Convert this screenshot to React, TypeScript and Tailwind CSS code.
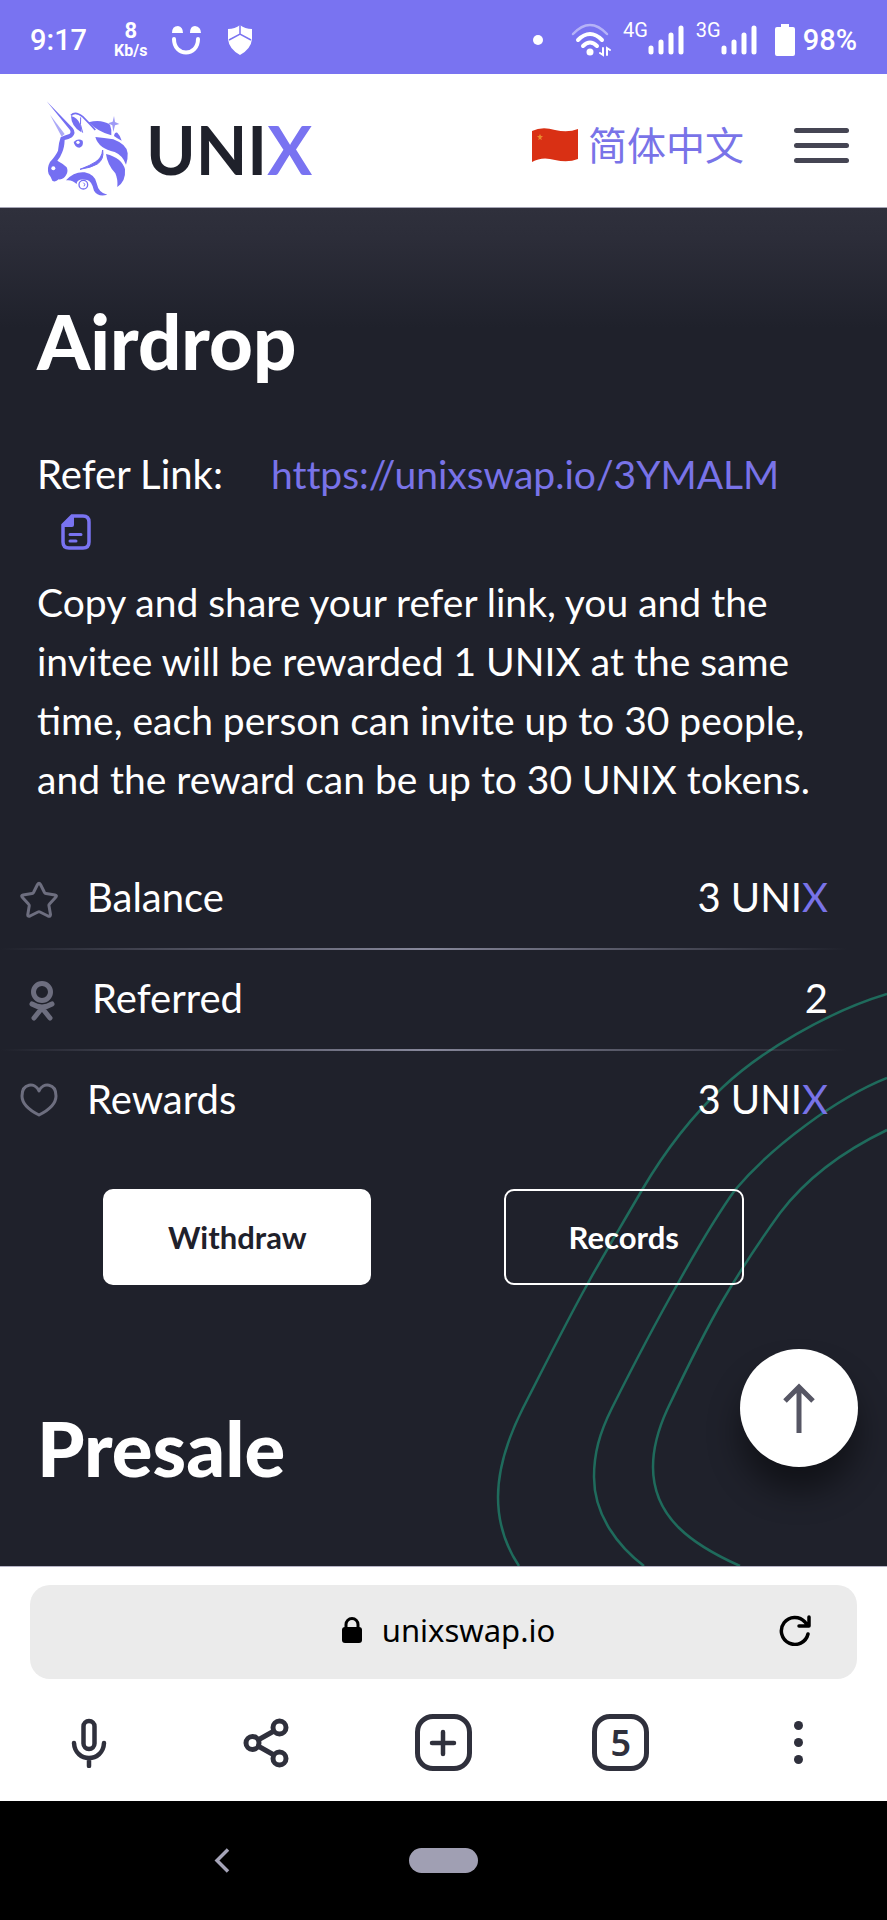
import { useState } from "react";

const LINK = "https://unixswap.io/3YMALM";

function UnicornLogo() {
  return (
    <svg viewBox="48 35 252 288" className="h-24 w-21 shrink-0" fill="#756ff2" aria-hidden="true">
      {/* horn and face */}
      <path d="M50 36 L128 116 Q140 130 126 144 Q116 150 104 152 Q103 176 96 190 Q90 206 82 214 Q98 222 110 234 Q116 246 108 258 Q100 272 86 270 Q76 280 67 274 Q64 264 56 254 Q50 236 60 218 Q78 198 84 184 Q86 160 92 144 Q104 138 118 134 Q124 130 120 122 Z" />
      <path d="M60 76 L104 134 L95 142 Z" opacity="0.6" />
      <circle cx="70" cy="237" r="6" fill="#fff" />
      {/* ear */}
      <path d="M123 80 Q142 84 150 104 Q156 120 154 129 Q124 112 123 80 Z" />
      <path d="M123 78 Q136 64 158 82 Q176 100 196 122" fill="none" stroke="#756ff2" strokeWidth="5" />
      <path d="M152 84 Q148 104 158 130" fill="none" stroke="#756ff2" strokeWidth="3" />
      {/* eye */}
      <path d="M131 158 Q144 146 158 154 Q162 170 148 175 Q134 174 131 158 Z" />
      <circle cx="144" cy="159" r="5" fill="#fff" />
      {/* mane */}
      <path d="M176 99 Q212 88 240 106 Q246 122 244 138 Q204 128 176 99 Z" />
      <path d="M252 140 Q254 128 262 130 Q272 140 275 154 Q262 148 252 140 Z" />
      <path d="M196 143 Q222 146 250 150 Q292 166 293 192 Q294 210 288 226 Q278 198 254 188 Q206 178 196 143 Z" />
      <path d="M228 194 Q276 206 285 240 Q288 276 262 293 Q264 270 256 252 Q232 226 228 194 Z" />
      <path d="M252 80 L255 98 L268 104 L255 108 L250 128 L247 108 L234 102 L248 97 Z" opacity="0.7" />
      {/* jaw and beard */}
      <path d="M218 182 Q223 210 202 224 Q184 235 150 240 Q182 228 196 218 Q216 206 218 182 Z" stroke="#756ff2" strokeWidth="3" />
      <path d="M108 273 Q132 246 164 249 Q196 256 200 282 Q206 312 232 316 Q204 324 192 304 Q186 276 172 272 Q140 266 140 284 Q126 270 108 273 Z" />
      <circle cx="160" cy="286" r="13" fill="#fff" stroke="#756ff2" strokeWidth="4" />
      <path d="M160 280 Q168 284 162 291" fill="none" stroke="#756ff2" strokeWidth="3" />
    </svg>
  );
}

function SignalBars() {
  return (
    <svg viewBox="0 0 36 30" className="h-[30px] w-9" stroke="#fff" strokeWidth="5" strokeLinecap="round" aria-hidden="true">
      <path d="M3 23V27M13 17V27M23 10V27M33 3V27" />
    </svg>
  );
}

function StatusBar() {
  return (
    <div className="flex justify-between bg-[#7973f1] px-[30px] pt-5 pb-[15px] font-[Roboto,sans-serif] text-white">
      <div className="flex items-center">
        <span className="text-[29px] leading-[34px] font-medium">9:17</span>
        <div className="ml-[27px] flex flex-col items-center font-bold">
          <span className="text-[22px] leading-[22px]">8</span>
          <span className="text-base leading-[17px]">Kb/s</span>
        </div>
        <svg viewBox="0 0 30 30" className="ml-6 h-[30px] w-[30px]" fill="#fff" aria-hidden="true">
          <path d="M1 8Q1 1 7 1Q12 2 12 8ZM19 8Q19 1 24 1Q30 2 30 8Z" />
          <path d="M3 14C3 32 27 32 27 14" fill="none" stroke="#fff" strokeWidth="4" strokeLinecap="round" />
        </svg>
        <svg viewBox="0 0 24 30" className="ml-[27px] h-[30px] w-6" fill="#fff" aria-hidden="true">
          <path d="M12 0Q17 4 24 4V14Q23 24 12 30Q1 24 0 14V4Q7 4 12 0Z" />
          <path d="M12 0V9M1 15L12 9L23 15" fill="none" stroke="#7973f1" strokeWidth="1.5" />
        </svg>
      </div>

      <div className="flex items-center">
        <span className="mr-7 h-[10px] w-[10px] rounded-full bg-white" />
        <svg viewBox="0 0 40 34" className="h-[34px] w-10" fill="none" stroke="#fff" strokeWidth="4" strokeLinecap="round" aria-hidden="true">
          <path d="M2 11Q19 -7 36 11" strokeWidth="2.5" opacity="0.45" />
          <path d="M7 17Q19 5 31 17M12 23Q19 16 26 23" />
          <circle cx="19" cy="29" r="3.5" fill="#fff" stroke="none" />
          <path d="M32 25V32L29 30M36 32V25L39 27" strokeWidth="2" />
        </svg>
        <span className="ml-3 self-start text-xl leading-5">4G</span>
        <SignalBars />
        <span className="ml-3 self-start text-xl leading-5">3G</span>
        <SignalBars />
        <svg viewBox="0 0 20 32" className="ml-[18px] h-8 w-5" fill="#fff" aria-hidden="true">
          <path d="M6 0H14V3H18Q20 3 20 5V30Q20 32 18 32H2Q0 32 0 30V5Q0 3 2 3H6Z" />
        </svg>
        <span className="ml-2 text-[29px] leading-[34px] font-medium">98%</span>
      </div>
    </div>
  );
}

function SiteHeader() {
  return (
    <header className="flex items-center justify-between border-b border-[#a5a5b5] bg-white pt-[27px] pr-[38px] pb-[10px] pl-[46px]">
      <a href="#" className="flex items-center gap-4">
        <UnicornLogo />
        <span className="text-[67px] leading-[80px] font-bold text-[#1f212b]">
          UNI<span className="text-[#7973f1]">X</span>
        </span>
      </a>
      <div className="flex items-center gap-[50px] pb-2">
        <button className="flex cursor-pointer items-center gap-[10px]">
          <svg viewBox="0 0 46 34" className="h-[34px] w-[46px]" aria-hidden="true">
            <path d="M0 3Q10 -2 23 2Q36 5 46 1V31Q36 35 23 32Q10 28 0 34Z" fill="#d93014" />
            <path d="M8 6L9 8L11 8L9 10L10 12L8 11L6 12L7 10L5 8L7 8Z" fill="#e98a2c" />
          </svg>
          <span className="pb-1 font-['Noto_Sans_CJK_SC',sans-serif] text-[39px] leading-[46px] text-[#7973e8]">
            简体中文
          </span>
        </button>
        <button aria-label="Menu" className="flex w-[55px] cursor-pointer flex-col gap-[10px]">
          <span className="h-[5px] rounded-full bg-[#454553]" />
          <span className="h-[5px] rounded-full bg-[#454553]" />
          <span className="h-[5px] rounded-full bg-[#454553]" />
        </button>
      </div>
    </header>
  );
}

function StarIcon() {
  return (
    <svg viewBox="0 -4 38 42" className="h-[42px] w-[38px]" fill="none" stroke="#6d6e7f" strokeWidth="3" strokeLinejoin="round" aria-hidden="true">
      <path d="M17.5 3.5Q19 1 20.5 3.5L24.5 11.5Q25 12.4 26 12.6L35 14Q37.5 14.5 35.5 16.5L29.5 23Q28.7 23.8 29 25L30.5 33.5Q30.5 36 28 35L20 31Q19 30.5 18 31L10 35Q7.5 36 7.8 33.5L9.2 25Q9.4 23.8 8.5 23L2.5 16.5Q.7 14.5 3 14L12 12.6Q13 12.4 13.5 11.5Z" />
    </svg>
  );
}

function PersonIcon() {
  return (
    <svg viewBox="0 -4 26 46" className="h-[46px] w-[26px]" fill="none" stroke="#6d6e7f" strokeWidth="5" strokeLinecap="round" aria-hidden="true">
      <circle cx="13" cy="12" r="8.5" />
      <path d="M3 24Q13 30 23 24M13 28L5 38M13 28L21 38" />
    </svg>
  );
}

function HeartIcon() {
  return (
    <svg viewBox="0 0 38 34" className="h-[34px] w-[38px]" fill="none" stroke="#6d6e7f" strokeWidth="3" strokeLinejoin="round" aria-hidden="true">
      <path d="M19 8C23 -1 36 0 36 13C36 20 29 27 19 32C9 27 2 20 2 13C2 0 15 -1 19 8Z" />
    </svg>
  );
}

function UnixAmount({ value }: { value: number }) {
  return (
    <>
      {value} UNI<span className="text-[#7973e8]">X</span>
    </>
  );
}

const rows = [
  { label: "Balance", icon: <StarIcon />, value: <UnixAmount value={3} /> },
  { label: "Referred", icon: <PersonIcon />, value: 2, wide: true },
  { label: "Rewards", icon: <HeartIcon />, value: <UnixAmount value={3} /> },
];

function Airdrop() {
  const [copied, setCopied] = useState(false);

  const copyLink = () => {
    navigator.clipboard?.writeText(LINK);
    setCopied(true);
  };

  return (
    <section className="relative">
      <h2 className="px-[37px] text-[76px] leading-[88px] font-black">Airdrop</h2>

      <div className="px-[37px] pt-[60px] text-[39px] leading-[59px]">
        <div className="flex flex-wrap gap-x-12">
          <span className="text-[40px]">Refer Link:</span>
          <a href={LINK} className="text-[#7973e8] [font-variant-ligatures:none]">{LINK}</a>
        </div>
        <button
          onClick={copyLink}
          aria-label={copied ? "Copied" : "Copy link"}
          className="ml-6 flex h-14 cursor-pointer items-center"
        >
          <svg viewBox="0 0 30 36" className="h-9 w-[30px]" aria-hidden="true">
            <path d="M11 2H22Q28 2 28 8V28Q28 34 22 34H8Q2 34 2 28V11Z" fill="none" stroke="#7973f1" strokeWidth="3.5" />
            <path d="M13 1V11Q13 13 11 13H1Z" fill="#7973f1" />
            <path d="M9 20.5H20M9 27H15" stroke="#7973f1" strokeWidth="3" strokeLinecap="round" />
          </svg>
        </button>
        <p className="pt-[13px]">
          Copy and share your refer link, you and the invitee will be rewarded 1
          UNIX at the same time, each person can invite up to 30 people, and the
          reward can be up to 30 UNIX tokens.
        </p>
      </div>

      <dl className="pt-10 text-[40px] leading-[59px]">
        {rows.map((row, i) => (
          <div key={row.label}>
            <div className="flex h-[99px] items-center pr-[59px] pb-[2px] pl-5">
              <dt className="flex flex-1 items-center">
                <span className={row.wide ? "mr-[37px] ml-[9px]" : "mr-[29px]"}>{row.icon}</span>
                {row.label}
              </dt>
              <dd>{row.value}</dd>
            </div>
            {i < rows.length - 1 && (
              <div className="mr-10 h-[2px] bg-linear-to-r from-transparent via-[#87889b] to-transparent" />
            )}
          </div>
        ))}
      </dl>

      <div className="grid grid-cols-2 justify-items-center pt-[39px] pr-[70px] pl-[44px] text-[31px] font-bold">
        <button className="h-24 w-[268px] cursor-pointer rounded-[10px] bg-white text-[#1f212b]">
          Withdraw
        </button>
        <button className="h-24 w-60 cursor-pointer rounded-[10px] border-2 border-white">
          Records
        </button>
      </div>
    </section>
  );
}

function Waves() {
  return (
    <svg
      viewBox="0 0 400 580"
      className="pointer-events-none absolute right-0 bottom-0 h-[580px] w-[400px]"
      fill="none"
      stroke="#1f6b5c"
      strokeWidth="2.5"
      aria-hidden="true"
    >
      <path d="M400 8C340 26 273 66 236 101C193 141 165 187 155 204C130 247 110 280 100 299C82 331 60 375 36 422C20 454 11 482 11 511C11 540 20 562 32 580" />
      <path d="M400 92C350 112 285 160 248 204C225 236 205 272 190 299C165 343 146 380 125 422C112 448 107 468 107 491C107 530 132 561 157 580" />
      <path d="M400 144C350 168 315 198 293 227C275 252 253 285 236 314C215 350 198 386 180 424C170 446 166 462 166 481C166 532 206 559 253 580" />
    </svg>
  );
}

function BrowserBar() {
  return (
    <footer className="border-t border-[#b5b3c5] bg-white font-['Noto_Sans',sans-serif] text-[#2f303c]">
      <div className="px-[30px] pt-[18px]">
        <div className="grid grid-cols-[1fr_auto_1fr] items-center rounded-[20px] bg-[#ebebeb] pt-5 pr-[46px] pb-6 pl-14 text-black">
          <span />
          <div className="flex items-center gap-5 text-[31px] leading-[50px]">
            <svg viewBox="0 0 20 26" className="h-[26px] w-5" aria-hidden="true">
              <rect y="10" width="20" height="16" rx="3" />
              <path d="M4 11V7.5A6 6 0 0 1 16 7.5V11" fill="none" stroke="#000" strokeWidth="3" />
            </svg>
            <span>unixswap.io</span>
          </div>
          <button aria-label="Reload" className="cursor-pointer justify-self-end">
            <svg viewBox="0 0 32 32" className="h-8 w-8" fill="none" stroke="#000" strokeWidth="3.5" strokeLinecap="round" strokeLinejoin="round" aria-hidden="true">
              <path d="M29 20A13.5 13.5 0 1 1 26 8L29 12M30 3V12H20" />
            </svg>
          </button>
        </div>
      </div>
      <div className="grid grid-cols-5 items-center justify-items-center pt-[35px] pb-[30px]">
        <button aria-label="Voice search" className="cursor-pointer">
          <svg viewBox="0 0 36 50" className="h-[50px] w-9" fill="none" stroke="currentColor" strokeWidth="4.5" strokeLinecap="round" aria-hidden="true">
            <rect x="12.5" y="3" width="11" height="28" rx="5.5" />
            <path d="M3 25C4 45 32 45 33 25M18 41V48" />
          </svg>
        </button>
        <button aria-label="Share" className="cursor-pointer">
          <svg viewBox="0 0 46 50" className="h-[50px] w-[46px]" fill="none" stroke="currentColor" strokeWidth="5" aria-hidden="true">
            <circle cx="9.5" cy="25" r="6.5" />
            <circle cx="36.5" cy="9.5" r="6.5" />
            <circle cx="36.5" cy="40.5" r="6.5" />
            <path d="M15 22L31 13M15 28L31 37" />
          </svg>
        </button>
        <button aria-label="New tab" className="flex h-[57px] w-[57px] cursor-pointer items-center justify-center rounded-[18px] border-5 border-[#2f303c]">
          <svg viewBox="0 0 28 28" className="h-7 w-7" stroke="currentColor" strokeWidth="4.5" strokeLinecap="round" aria-hidden="true">
            <path d="M14 3V25M3 14H25" />
          </svg>
        </button>
        <button aria-label="Open tabs" className="flex h-[57px] w-[57px] cursor-pointer items-center justify-center rounded-[18px] border-5 border-[#2f303c] text-4xl leading-9 font-semibold">
          5
        </button>
        <button aria-label="More" className="flex cursor-pointer flex-col gap-2">
          <span className="h-[9px] w-[9px] rounded-full bg-[#2f303c]" />
          <span className="h-[9px] w-[9px] rounded-full bg-[#2f303c]" />
          <span className="h-[9px] w-[9px] rounded-full bg-[#2f303c]" />
        </button>
      </div>
    </footer>
  );
}

function SystemNav() {
  return (
    <nav className="grid grid-cols-3 items-center justify-items-center bg-black px-[12.5%] py-[47px]">
      <button aria-label="Back" className="cursor-pointer">
        <svg viewBox="0 0 16 25" className="h-[25px] w-4" fill="none" stroke="#a5a4b8" strokeWidth="3.5" aria-hidden="true">
          <path d="M14 1.5L3 12.5L14 23.5" />
        </svg>
      </button>
      <button aria-label="Home" className="h-[25px] w-[69px] cursor-pointer rounded-full bg-[#a09fb3]" />
    </nav>
  );
}

export default function App() {
  return (
    <div className="min-h-screen bg-black font-[Lato,sans-serif]">
      <StatusBar />
      <SiteHeader />

      <main className="relative bg-[linear-gradient(#2f303c,#2c2d39_30px,#1f212b_120px)] pt-[89px] pb-[74px] text-white">
        <Waves />
        <Airdrop />
        <h2 className="px-[37px] pt-[119px] text-[76px] leading-[88px] font-black">Presale</h2>
        <button
          aria-label="Back to top"
          onClick={() => window.scrollTo({ top: 0, behavior: "smooth" })}
          className="absolute right-[29px] bottom-[99px] flex h-[118px] w-[118px] cursor-pointer items-center justify-center rounded-full bg-white shadow-[0_24px_32px_rgba(0,0,0,0.45)]"
        >
          <svg viewBox="0 0 32 50" className="h-[50px] w-8" fill="none" stroke="#565664" strokeWidth="5" aria-hidden="true">
            <path d="M16 50V4M2 18L16 4L30 18" />
          </svg>
        </button>
      </main>

      <BrowserBar />
      <SystemNav />
    </div>
  );
}
